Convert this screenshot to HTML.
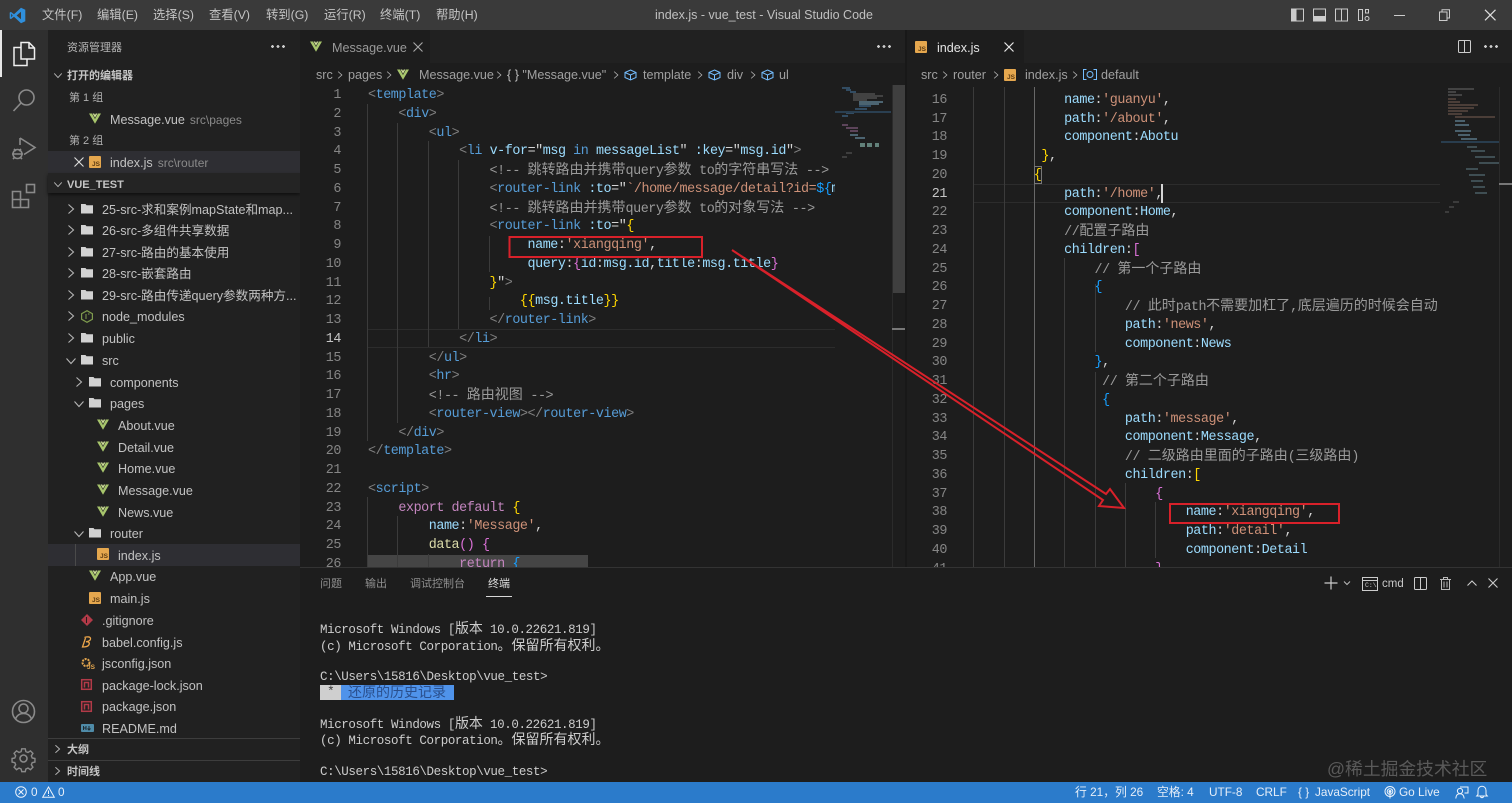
<!DOCTYPE html>
<html lang="zh-CN"><head><meta charset="utf-8"><title>index.js - vue_test - Visual Studio Code</title>
<style>
*{box-sizing:border-box}
html,body{margin:0;padding:0;width:1512px;height:803px;overflow:hidden;background:#1d1d1d}
body{font-family:"Liberation Sans","Noto Sans CJK SC",sans-serif;font-size:13px;color:#ccc;position:relative}
.a{position:absolute;white-space:nowrap}
svg{position:absolute;overflow:visible}
.m{top:7px;font-size:12.3px;line-height:16px;color:#c4c4c4}
.r{position:absolute;white-space:nowrap;font-size:12.6px;line-height:18px;color:#c2c2c2;margin-top:1px}
.h{position:absolute;white-space:nowrap;font-size:11px;font-weight:700;line-height:14px;color:#c4c4c4;margin-top:1px}
.g{position:absolute;white-space:nowrap;font-size:11px;line-height:14px;color:#b0b0b0;margin-top:1px}
.d{font-size:12px;color:#8a8a8a;margin-left:5px}
.js{position:absolute;width:12px;height:12px;background:#e5a74e;border-radius:1px;color:#5b3a12;font:700 6.5px/7px "Liberation Sans",sans-serif;text-align:right;padding:5px 1px 0 0}
.code,.nums{position:absolute;font-family:"Liberation Mono","Noto Sans CJK SC",monospace;font-size:13.4px;letter-spacing:-.44px;line-height:18.75px;white-space:normal}
.code div,.nums div{height:18.75px;white-space:pre}
.nums{color:#858585;text-align:right;width:40px}
.z{font-family:"Noto Sans CJK SC",sans-serif;font-size:14px;letter-spacing:0;line-height:1}
.clip{position:absolute;overflow:hidden}
.t{color:#569cd6}.b{color:#808080}.v{color:#9cdcfe}.s{color:#ce9178}.c{color:#9a9a9a}.p{color:#c586c0}.f{color:#dcdcaa}.w{color:#d4d4d4}.y{color:#ffd700}.o{color:#da70d6}.u{color:#179fff}.k{color:#4ec9b0}
.ig{position:absolute;width:1px;background:#3b3b3b}
.term{position:absolute;left:320px;font-family:"Liberation Mono","Noto Sans CJK SC",monospace;font-size:12.5px;letter-spacing:-.4px;line-height:16px;color:#cccccc;white-space:pre;margin-top:-1px}
.st{position:absolute;top:785px;font-size:11.8px;line-height:15px;color:#e6eef8;white-space:nowrap}
.pt{position:absolute;top:577px;font-size:11px;line-height:14px;color:#8f8f8f}
.i{fill:none;stroke:#8a8a8a;stroke-width:1.6}
.ch{fill:none;stroke:#b5b5b5;stroke-width:1.1}
</style></head><body>
<svg width="0" height="0" style="position:absolute"><defs>
<symbol id="vue" viewBox="0 0 12 11"><path d="M0 .5h3L6 6 9 .5h3L6 10.8z" fill="#a7c56c"/><path d="M3.6.5H5.2L6 2 6.8.5h1.6L6 4.8z" fill="#d0e09a"/></symbol>
<symbol id="fo" viewBox="0 0 12 11"><path d="M0 1h4.5l1 1.2H12V10.5H0z" fill="#d2d2d2"/></symbol>
<symbol id="cr" viewBox="0 0 8 12"><path d="M1.5 1.5 6.5 6l-5 4.5" fill="none" stroke="#b5b5b5" stroke-width="1.1"/></symbol>
<symbol id="cd" viewBox="0 0 12 8"><path d="M1.5 1.5 6 6.5l4.5-5" fill="none" stroke="#b5b5b5" stroke-width="1.1"/></symbol>
</defs></svg>

<!-- title bar -->
<div class="a" style="left:0;top:0;width:1512px;height:30px;background:#3a3a3a"></div>
<svg style="left:9px;top:7px" width="17" height="17" viewBox="0 0 17 17"><path d="M12 .7 16.3 2.7V14.3L12 16.3 5 9.7 1.9 12.1.7 11.4V5.6L1.9 4.9 5 7.3z" fill="#2f8fdc"/><path d="M12 4.8 7.6 8.5 12 12.2z" fill="#3a3a3a"/><path d="M2.2 6.6 3.7 8.5 2.2 10.4z" fill="#3a3a3a"/></svg>
<div class="a m" style="left:42px">文件(F)</div><div class="a m" style="left:97px">编辑(E)</div><div class="a m" style="left:153px">选择(S)</div><div class="a m" style="left:209px">查看(V)</div><div class="a m" style="left:266px">转到(G)</div><div class="a m" style="left:324px">运行(R)</div><div class="a m" style="left:380px">终端(T)</div><div class="a m" style="left:436px">帮助(H)</div>
<div class="a" style="left:655px;top:7px;font-size:12.5px;line-height:16px;color:#c0c0c0">index.js - vue_test - Visual Studio Code</div>
<svg style="left:1291px;top:8px" width="80" height="14" viewBox="0 0 80 14">
<rect x=".5" y="1" width="12" height="12" fill="none" stroke="#ccc"/><rect x=".5" y="1" width="5" height="12" fill="#ccc"/>
<rect x="22.5" y="1" width="12" height="12" fill="none" stroke="#ccc"/><rect x="22.5" y="8" width="12" height="5" fill="#ccc"/>
<rect x="44.5" y="1" width="12" height="12" fill="none" stroke="#ccc"/><path d="M50.5 1v12" stroke="#ccc"/>
<rect x="67.5" y="1.5" width="4" height="11" fill="none" stroke="#ccc"/><rect x="74.5" y="1.5" width="3" height="3.5" fill="none" stroke="#ccc"/><circle cx="76" cy="10.5" r="2" fill="none" stroke="#ccc"/></svg>
<svg style="left:1394px;top:9px" width="106" height="12" viewBox="0 0 106 12"><path d="M0 6.5H11" stroke="#ccc"/><path d="M45.5 3h7.500v8.500H45.500zM48 3V.8h7.500V9H53" fill="none" stroke="#ccc"/><path d="M91 .8 101.500 11.300M101.500 .8 91 11.300" stroke="#ddd" stroke-width="1.200"/></svg>

<!-- activity bar -->
<div class="a" style="left:0;top:30px;width:48px;height:752px;background:#2f2f2f"></div>
<div class="a" style="left:0;top:30px;width:2px;height:47px;background:#e8e8e8"></div>
<svg style="left:12px;top:41px" width="24" height="26" viewBox="0 0 24 26" fill="none" stroke="#efefef" stroke-width="1.500"><path d="M9 1.500h8l5.500 5.500V18H9z"/><path d="M17 1.500V7h5.500"/><path d="M9 6.500H2V24.500H15V18"/></svg>
<svg style="left:12px;top:88px" width="24" height="24" viewBox="0 0 24 24" class="i"><circle cx="14.500" cy="9.500" r="7.500"/><path d="M9 15 1.500 23"/></svg>
<svg style="left:11px;top:136px" width="26" height="26" viewBox="0 0 26 26" class="i"><path d="M9 2 24 11.500 13 18.500M9 2v7"/><circle cx="6.500" cy="18" r="4.500"/><path d="M1 18h11M3 13l2 2M10 13l-2 2M2 23l2-2M11 23l-2-2"/></svg>
<svg style="left:11px;top:183px" width="26" height="26" viewBox="0 0 26 26" class="i"><path d="M1.500 8.500h8v8h8v8h-16zM1.500 16.500h8v8"/><rect x="15.500" y="1.500" width="8" height="8"/></svg>
<svg style="left:11px;top:699px" width="25" height="25" viewBox="0 0 25 25" class="i"><circle cx="12.500" cy="12.500" r="11"/><circle cx="12.500" cy="9.500" r="4.500"/><path d="M4.500 20c1.500-4 4-5.500 8-5.500s6.500 1.500 8 5.500"/></svg>
<svg style="left:11px;top:746px" width="25" height="25" viewBox="0 0 25 25" class="i"><circle cx="12.500" cy="12.500" r="3.500"/><path d="M10.500 1.500h4l.7 3.200 2.400 1 2.800-1.800 2.800 2.800-1.800 2.800 1 2.400 3.100.6v4l-3.100.7-1 2.400 1.800 2.800-2.800 2.800-2.800-1.800-2.400 1-.7 3h-4l-.7-3-2.400-1-2.800 1.800-2.800-2.800 1.800-2.800-1-2.400-3.100-.7v-4l3.100-.6 1-2.400-1.800-2.800 2.800-2.800 2.800 1.800 2.400-1z" transform="translate(1.500 1.500) scale(.88)"/></svg>

<!-- sidebar -->
<div class="a" style="left:48px;top:30px;width:252px;height:752px;background:#212121"></div>
<div class="g" style="left:67px;top:40px;color:#b5b5b5">资源管理器</div>
<div class="a" style="left:271px;top:45px;width:14px;height:3px;background:radial-gradient(circle at 1.500px 1.500px,#ccc 1.300px,transparent 1.500px) 0 0/5.500px 3px repeat-x"></div>
<svg style="left:53px;top:72px" width="10" height="7"><use href="#cd" width="10" height="7"/></svg>
<div class="h" style="left:67px;top:68px">打开的编辑器</div>
<div class="g" style="left:69px;top:90px">第 1 组</div>
<svg style="left:89px;top:113px" width="12" height="11"><use href="#vue" width="12" height="11"/></svg>
<div class="r" style="left:110px;top:110px">Message.vue<span class="d">src\pages</span></div>
<div class="g" style="left:69px;top:133px">第 2 组</div>
<div class="a" style="left:48px;top:151px;width:252px;height:22px;background:#2e2e33"></div>
<svg style="left:74px;top:157px" width="10" height="10"><path d="M.5.500 9.500 9.500M9.500.500.500 9.500" stroke="#ddd" stroke-width="1.100"/></svg>
<div class="js" style="left:89px;top:156px">JS</div>
<div class="r" style="left:110px;top:153px">index.js<span class="d">src\router</span></div>
<div class="a" style="left:48px;top:173px;width:252px;height:20px;background:#242424;box-shadow:0 2px 3px #111"></div>
<svg style="left:53px;top:181px" width="10" height="7"><use href="#cd" width="10" height="7"/></svg>
<div class="h" style="left:67px;top:177px">VUE_TEST</div>

<svg style="left:67px;top:203px" width="8" height="12"><use href="#cr" width="8" height="12"/></svg><svg style="left:81px;top:203px" width="12" height="11"><use href="#fo" width="12" height="11"/></svg><div class="r" style="left:102px;top:200px">25-src-求和案例mapState和map...</div>
<svg style="left:67px;top:224px" width="8" height="12"><use href="#cr" width="8" height="12"/></svg><svg style="left:81px;top:224px" width="12" height="11"><use href="#fo" width="12" height="11"/></svg><div class="r" style="left:102px;top:221px">26-src-多组件共享数据</div>
<svg style="left:67px;top:246px" width="8" height="12"><use href="#cr" width="8" height="12"/></svg><svg style="left:81px;top:246px" width="12" height="11"><use href="#fo" width="12" height="11"/></svg><div class="r" style="left:102px;top:243px">27-src-路由的基本使用</div>
<svg style="left:67px;top:267px" width="8" height="12"><use href="#cr" width="8" height="12"/></svg><svg style="left:81px;top:267px" width="12" height="11"><use href="#fo" width="12" height="11"/></svg><div class="r" style="left:102px;top:264px">28-src-嵌套路由</div>
<svg style="left:67px;top:289px" width="8" height="12"><use href="#cr" width="8" height="12"/></svg><svg style="left:81px;top:289px" width="12" height="11"><use href="#fo" width="12" height="11"/></svg><div class="r" style="left:102px;top:286px">29-src-路由传递query参数两种方...</div>
<svg style="left:67px;top:310px" width="8" height="12"><use href="#cr" width="8" height="12"/></svg><svg style="left:81px;top:310px" width="12" height="13" viewBox="0 0 12 13"><path d="M6 .7 11.400 3.700V9.300L6 12.300.6 9.300V3.700z" fill="none" stroke="#7f9c4e" stroke-width="1.200"/><path d="M5 4v5M7 4H8.500" stroke="#7f9c4e"/></svg><div class="r" style="left:102px;top:307px">node_modules</div>
<svg style="left:67px;top:332px" width="8" height="12"><use href="#cr" width="8" height="12"/></svg><svg style="left:81px;top:332px" width="12" height="11"><use href="#fo" width="12" height="11"/></svg><div class="r" style="left:102px;top:329px">public</div>
<svg style="left:65px;top:357px" width="12" height="8"><use href="#cd" width="12" height="8"/></svg><svg style="left:81px;top:354px" width="12" height="11"><use href="#fo" width="12" height="11"/></svg><div class="r" style="left:102px;top:351px">src</div>
<svg style="left:75px;top:376px" width="8" height="12"><use href="#cr" width="8" height="12"/></svg><svg style="left:89px;top:376px" width="12" height="11"><use href="#fo" width="12" height="11"/></svg><div class="r" style="left:110px;top:373px">components</div>
<svg style="left:73px;top:400px" width="12" height="8"><use href="#cd" width="12" height="8"/></svg><svg style="left:89px;top:397px" width="12" height="11"><use href="#fo" width="12" height="11"/></svg><div class="r" style="left:110px;top:394px">pages</div>
<svg style="left:97px;top:419px" width="12" height="11"><use href="#vue" width="12" height="11"/></svg><div class="r" style="left:118px;top:416px">About.vue</div>
<svg style="left:97px;top:441px" width="12" height="11"><use href="#vue" width="12" height="11"/></svg><div class="r" style="left:118px;top:438px">Detail.vue</div>
<svg style="left:97px;top:462px" width="12" height="11"><use href="#vue" width="12" height="11"/></svg><div class="r" style="left:118px;top:459px">Home.vue</div>
<svg style="left:97px;top:484px" width="12" height="11"><use href="#vue" width="12" height="11"/></svg><div class="r" style="left:118px;top:481px">Message.vue</div>
<svg style="left:97px;top:506px" width="12" height="11"><use href="#vue" width="12" height="11"/></svg><div class="r" style="left:118px;top:503px">News.vue</div>
<svg style="left:73px;top:530px" width="12" height="8"><use href="#cd" width="12" height="8"/></svg><svg style="left:89px;top:527px" width="12" height="11"><use href="#fo" width="12" height="11"/></svg><div class="r" style="left:110px;top:524px">router</div>
<div class="a" style="left:48px;top:544px;width:252px;height:22px;background:#2e2e33"></div>
<div class="a" style="left:75px;top:544px;width:1px;height:22px;background:#4a4a4a"></div>
<div class="js" style="left:97px;top:548px">JS</div><div class="r" style="left:118px;top:546px">index.js</div>
<svg style="left:89px;top:570px" width="12" height="11"><use href="#vue" width="12" height="11"/></svg><div class="r" style="left:110px;top:567px">App.vue</div>
<div class="js" style="left:89px;top:592px">JS</div><div class="r" style="left:110px;top:589px">main.js</div>
<svg style="left:81px;top:614px" width="12" height="12" viewBox="0 0 12 12"><path d="M6 0 12 6 6 12 0 6z" fill="#b23a48"/><path d="M5.500 3v6" stroke="#2a1a1a"/></svg><div class="r" style="left:102px;top:611px">.gitignore</div>
<svg style="left:81px;top:636px" width="12" height="12" viewBox="0 0 12 12" fill="none" stroke="#eea64a" stroke-width="1.300"><path d="M3.500 1.500C6 .5 10 .5 9.500 3S6 5.500 5 5.800C8 5.500 9 7 7.800 9S3.500 11 1.500 11L4.500 2"/></svg><div class="r" style="left:102px;top:633px">babel.config.js</div>
<svg style="left:81px;top:657px" width="13" height="13" viewBox="0 0 13 13"><circle cx="5" cy="5.500" r="3.500" fill="none" stroke="#e5a74e" stroke-width="2" stroke-dasharray="2 1"/></svg><div class="a" style="left:87px;top:664px;font:700 6.500px/7px 'Liberation Sans',sans-serif;color:#e5a74e">JS</div><div class="r" style="left:102px;top:654px">jsconfig.json</div>
<svg style="left:81px;top:679px" width="11" height="11" viewBox="0 0 11 11" fill="none" stroke="#b23a48" stroke-width="1.500"><rect x=".7" y=".7" width="9.600" height="9.600"/><path d="M3.500 8.500V3.500H7.500V8.500"/></svg><div class="r" style="left:102px;top:676px">package-lock.json</div>
<svg style="left:81px;top:701px" width="11" height="11" viewBox="0 0 11 11" fill="none" stroke="#b23a48" stroke-width="1.500"><rect x=".7" y=".7" width="9.600" height="9.600"/><path d="M3.500 8.500V3.500H7.500V8.500"/></svg><div class="r" style="left:102px;top:697px">package.json</div>
<svg style="left:81px;top:724px" width="13" height="8" viewBox="0 0 13 8"><rect width="13" height="8" rx="1" fill="#4f8ba8"/><path d="M2.500 6V2M5 6V2M2.500 4H5M8 2v3M6.500 4.500 8 6l1.500-1.500" stroke="#1f2a30" fill="none"/></svg><div class="r" style="left:102px;top:719px">README.md</div>
<div class="a" style="left:48px;top:738px;width:252px;height:1px;background:#3d3d3d"></div>
<div class="a" style="left:48px;top:760px;width:252px;height:1px;background:#3d3d3d"></div>
<svg style="left:54px;top:744px" width="7" height="10"><use href="#cr" width="7" height="10"/></svg><div class="h" style="left:67px;top:742px">大纲</div>
<svg style="left:54px;top:766px" width="7" height="10"><use href="#cr" width="7" height="10"/></svg><div class="h" style="left:67px;top:764px">时间线</div>

<!-- editor tab bars -->
<div class="a" style="left:300px;top:30px;width:1212px;height:33px;background:#212121"></div>
<div class="a" style="left:300px;top:30px;width:130px;height:33px;background:#1d1d1d"></div>
<div class="a" style="left:907px;top:30px;width:117px;height:33px;background:#1d1d1d"></div>
<div class="a" style="left:300px;top:63px;width:1212px;height:23px;background:#1d1d1d"></div>
<div class="a" style="left:905px;top:30px;width:2px;height:537px;background:#181818"></div>
<svg style="left:310px;top:41px" width="12" height="11"><use href="#vue" width="12" height="11"/></svg>
<div class="r" style="left:332px;top:38px;color:#9a9a9a">Message.vue</div>
<svg style="left:413px;top:42px" width="10" height="10"><path d="M.5.500 9.500 9.500M9.500.500.500 9.500" stroke="#a8a8a8" stroke-width="1.100"/></svg>
<div class="a" style="left:877px;top:45px;width:14px;height:3px;background:radial-gradient(circle at 1.500px 1.500px,#ccc 1.300px,transparent 1.500px) 0 0/5.500px 3px repeat-x"></div>
<div class="js" style="left:915px;top:41px">JS</div>
<div class="r" style="left:937px;top:38px;color:#e4e4e4">index.js</div>
<svg style="left:1004px;top:42px" width="10" height="10"><path d="M.5.500 9.500 9.500M9.500.500.500 9.500" stroke="#e8e8e8" stroke-width="1.200"/></svg>
<svg style="left:1458px;top:40px" width="13" height="13"><rect x=".5" y=".5" width="12" height="12" fill="none" stroke="#ccc" rx="1"/><path d="M6.500.500v12" stroke="#ccc"/></svg>
<div class="a" style="left:1484px;top:45px;width:14px;height:3px;background:radial-gradient(circle at 1.500px 1.500px,#ccc 1.300px,transparent 1.500px) 0 0/5.500px 3px repeat-x"></div>

<!-- breadcrumbs -->
<div class="r" style="left:316px;top:65px;color:#a0a0a0">src</div>
<svg style="left:337px;top:70px" width="6" height="10"><use href="#cr" width="6" height="10"/></svg>
<div class="r" style="left:348px;top:65px;color:#a0a0a0">pages</div>
<svg style="left:386px;top:70px" width="6" height="10"><use href="#cr" width="6" height="10"/></svg>
<svg style="left:397px;top:69px" width="12" height="11"><use href="#vue" width="12" height="11"/></svg>
<div class="r" style="left:419px;top:65px;color:#a0a0a0">Message.vue</div>
<svg style="left:496px;top:70px" width="6" height="10"><use href="#cr" width="6" height="10"/></svg>
<div class="r" style="left:507px;top:65px;color:#a0a0a0"><span style="color:#bbb">{ }</span> "Message.vue"</div>
<svg style="left:613px;top:70px" width="6" height="10"><use href="#cr" width="6" height="10"/></svg>
<svg style="left:624px;top:69px" width="13" height="12" viewBox="0 0 13 12"><path d="M6.500 1 12 3.500v5L6.500 11 1 8.500v-5zM1 3.500 6.500 6 12 3.500M6.500 6v5" fill="none" stroke="#75beff"/></svg>
<div class="r" style="left:643px;top:65px;color:#a0a0a0">template</div>
<svg style="left:697px;top:70px" width="6" height="10"><use href="#cr" width="6" height="10"/></svg>
<svg style="left:708px;top:69px" width="13" height="12" viewBox="0 0 13 12"><path d="M6.500 1 12 3.500v5L6.500 11 1 8.500v-5zM1 3.500 6.500 6 12 3.500M6.500 6v5" fill="none" stroke="#75beff"/></svg>
<div class="r" style="left:727px;top:65px;color:#a0a0a0">div</div>
<svg style="left:750px;top:70px" width="6" height="10"><use href="#cr" width="6" height="10"/></svg>
<svg style="left:761px;top:69px" width="13" height="12" viewBox="0 0 13 12"><path d="M6.500 1 12 3.500v5L6.500 11 1 8.500v-5zM1 3.500 6.500 6 12 3.500M6.500 6v5" fill="none" stroke="#75beff"/></svg>
<div class="r" style="left:779px;top:65px;color:#a0a0a0">ul</div>

<div class="r" style="left:921px;top:65px;color:#a0a0a0">src</div>
<svg style="left:942px;top:70px" width="6" height="10"><use href="#cr" width="6" height="10"/></svg>
<div class="r" style="left:953px;top:65px;color:#a0a0a0">router</div>
<svg style="left:993px;top:70px" width="6" height="10"><use href="#cr" width="6" height="10"/></svg>
<div class="js" style="left:1004px;top:69px">JS</div>
<div class="r" style="left:1025px;top:65px;color:#a0a0a0">index.js</div>
<svg style="left:1072px;top:70px" width="6" height="10"><use href="#cr" width="6" height="10"/></svg>
<svg style="left:1083px;top:69px" width="14" height="11" viewBox="0 0 14 11" fill="none" stroke="#75beff"><path d="M3.500.500H.5v10h3M10.500.500h3v10h-3"/><circle cx="7" cy="5.500" r="3"/></svg>
<div class="r" style="left:1101px;top:65px;color:#a0a0a0">default</div>

<!-- left editor -->
<div class="clip" style="left:300px;top:85px;width:605px;height:482px;background:#1d1d1d">
<div class="a" style="left:67px;top:244px;width:468px;height:19px;border-top:1px solid #2c2c2c;border-bottom:1px solid #2c2c2c"></div>
<div class="a" style="left:67px;top:470px;width:221px;height:14px;background:#454545"></div>
<div class="ig" style="left:67px;top:19px;height:337px"></div>
<div class="ig" style="left:97px;top:38px;height:300px"></div>
<div class="ig" style="left:128px;top:56px;height:206px"></div>
<div class="ig" style="left:158px;top:75px;height:169px"></div>
<div class="ig" style="left:189px;top:151px;height:36px"></div>
<div class="ig" style="left:189px;top:212px;height:13px"></div>
<div class="ig" style="left:67px;top:412px;height:70px"></div>
<div class="ig" style="left:97px;top:431px;height:51px"></div>
<div class="ig" style="left:128px;top:469px;height:13px"></div>
<div class="nums" style="left:1px;top:2px"><div>1</div><div>2</div><div>3</div><div>4</div><div>5</div><div>6</div><div>7</div><div>8</div><div>9</div><div>10</div><div>11</div><div>12</div><div>13</div><div style="color:#c6c6c6">14</div><div>15</div><div>16</div><div>17</div><div>18</div><div>19</div><div>20</div><div>21</div><div>22</div><div>23</div><div>24</div><div>25</div><div>26</div></div>
<div class="clip" style="left:68px;top:0;width:467px;height:482px">
<div class="code" style="left:0;top:2px">
<div><span class="b">&lt;</span><span class="t">template</span><span class="b">&gt;</span></div>
<div>    <span class="b">&lt;</span><span class="t">div</span><span class="b">&gt;</span></div>
<div>        <span class="b">&lt;</span><span class="t">ul</span><span class="b">&gt;</span></div>
<div>            <span class="b">&lt;</span><span class="t">li</span> <span class="v">v-for</span><span class="w">="</span><span class="v">msg</span> <span class="t">in</span> <span class="v">messageList</span><span class="w">"</span> <span class="v">:key</span><span class="w">="</span><span class="v">msg.id</span><span class="w">"</span><span class="b">&gt;</span></div>
<div>                <span class="c">&lt;!-- <span class="z">跳转路由并携带</span>query<span class="z">参数</span> to<span class="z">的字符串写法</span> --&gt;</span></div>
<div>                <span class="b">&lt;</span><span class="t">router-link</span> <span class="v">:to</span><span class="w">="</span><span class="s">`/home/message/detail?id=</span><span class="u">${</span><span class="v">msg.id</span></div>
<div>                <span class="c">&lt;!-- <span class="z">跳转路由并携带</span>query<span class="z">参数</span> to<span class="z">的对象写法</span> --&gt;</span></div>
<div>                <span class="b">&lt;</span><span class="t">router-link</span> <span class="v">:to</span><span class="w">="</span><span class="y">{</span></div>
<div>                     <span class="v">name</span><span class="w">:</span><span class="s">'xiangqing'</span><span class="w">,</span></div>
<div>                     <span class="v">query</span><span class="w">:</span><span class="o">{</span><span class="v">id</span><span class="w">:</span><span class="v">msg.id</span><span class="w">,</span><span class="v">title</span><span class="w">:</span><span class="v">msg.title</span><span class="o">}</span></div>
<div>                <span class="y">}</span><span class="w">"</span><span class="b">&gt;</span></div>
<div>                    <span class="y">{{</span><span class="v">msg.title</span><span class="y">}}</span></div>
<div>                <span class="b">&lt;/</span><span class="t">router-link</span><span class="b">&gt;</span></div>
<div>            <span class="b">&lt;/</span><span class="t">li</span><span class="b">&gt;</span></div>
<div>        <span class="b">&lt;/</span><span class="t">ul</span><span class="b">&gt;</span></div>
<div>        <span class="b">&lt;</span><span class="t">hr</span><span class="b">&gt;</span></div>
<div>        <span class="c">&lt;!-- <span class="z">路由视图</span> --&gt;</span></div>
<div>        <span class="b">&lt;</span><span class="t">router-view</span><span class="b">&gt;&lt;/</span><span class="t">router-view</span><span class="b">&gt;</span></div>
<div>    <span class="b">&lt;/</span><span class="t">div</span><span class="b">&gt;</span></div>
<div><span class="b">&lt;/</span><span class="t">template</span><span class="b">&gt;</span></div>
<div> </div>
<div><span class="b">&lt;</span><span class="t">script</span><span class="b">&gt;</span></div>
<div>    <span class="p">export default</span> <span class="y">{</span></div>
<div>        <span class="v">name</span><span class="w">:</span><span class="s">'Message'</span><span class="w">,</span></div>
<div>        <span class="f">data</span><span class="o">()</span> <span class="o">{</span></div>
<div>            <span class="p">return</span> <span class="u">{</span></div>
</div></div>
<!-- minimap -->
<svg style="left:535px;top:0" width="57" height="110" viewBox="0 0 57 110" opacity=".75">
<g stroke-width="1"><path d="M7 3h8M11 5h5M15 7h6" stroke="#569cd6"/><path d="M18 9h22M18 11h30M18 13h24M18 15h14" stroke="#7f7f7f"/><path d="M24 17h24M24 19h20" stroke="#9cdcfe"/><path d="M24 21h12M20 24h12" stroke="#569cd6"/><path d="M11 28h8M7 31h6" stroke="#569cd6"/><path d="M0 27h56" stroke="#2f4b63" stroke-width="2"/><path d="M7 40h6M11 43h12M15 46h8" stroke="#c586c0"/><path d="M15 50h8M20 53h10" stroke="#9cdcfe"/><path d="M25 60h5M32 60h5M40 60h4" stroke="#7aa39a" stroke-width="4"/><path d="M11 68h6M7 72h5" stroke="#777"/></g></svg>
<div class="a" style="left:592px;top:0;width:13px;height:208px;background:#3f3f3f"></div>
<div class="a" style="left:592px;top:0;width:1px;height:482px;background:#2b2b2b"></div>
<div class="a" style="left:592px;top:243px;width:13px;height:2px;background:#777"></div>
</div>

<!-- right editor -->
<div class="clip" style="left:907px;top:87px;width:605px;height:480px;background:#1d1d1d">
<div class="a" style="left:66px;top:97px;width:467px;height:19px;border-top:1px solid #2c2c2c;border-bottom:1px solid #2c2c2c"></div>
<div class="ig" style="left:66px;top:0;height:480px"></div>
<div class="ig" style="left:97px;top:0;height:480px"></div>
<div class="ig" style="left:127px;top:0;height:480px;background:#686868"></div>
<div class="ig" style="left:157px;top:171px;height:309px"></div>
<div class="ig" style="left:188px;top:197px;height:68px"></div>
<div class="ig" style="left:188px;top:285px;height:195px"></div>
<div class="ig" style="left:218px;top:396px;height:84px"></div>
<div class="ig" style="left:248px;top:415px;height:56px"></div>
<div class="nums" style="left:0;top:-14px"><div>15</div><div>16</div><div>17</div><div>18</div><div>19</div><div>20</div><div style="color:#c6c6c6">21</div><div>22</div><div>23</div><div>24</div><div>25</div><div>26</div><div>27</div><div>28</div><div>29</div><div>30</div><div>31</div><div>32</div><div>33</div><div>34</div><div>35</div><div>36</div><div>37</div><div>38</div><div>39</div><div>40</div><div>41</div></div>
<div class="a" style="left:127px;top:79px;width:8px;height:18px;border:1px solid #777"></div>
<div class="clip" style="left:66px;top:0;width:467px;height:480px">
<div class="code" style="left:0;top:-14px">
<div>        <span class="y">{</span></div>
<div>            <span class="v">name</span><span class="w">:</span><span class="s">'guanyu'</span><span class="w">,</span></div>
<div>            <span class="v">path</span><span class="w">:</span><span class="s">'/about'</span><span class="w">,</span></div>
<div>            <span class="v">component</span><span class="w">:</span><span class="v">Abotu</span></div>
<div>         <span class="y">}</span><span class="w">,</span></div>
<div>        <span class="y">{</span></div>
<div>            <span class="v">path</span><span class="w">:</span><span class="s">'/home'</span><span class="w">,</span></div>
<div>            <span class="v">component</span><span class="w">:</span><span class="v">Home</span><span class="w">,</span></div>
<div>            <span class="c">//<span class="z">配置子路由</span></span></div>
<div>            <span class="v">children</span><span class="w">:</span><span class="o">[</span></div>
<div>                <span class="c">// <span class="z">第一个子路由</span></span></div>
<div>                <span class="u">{</span></div>
<div>                    <span class="c">// <span class="z">此时</span>path<span class="z">不需要加杠了</span>,<span class="z">底层遍历的时候会自动</span></span></div>
<div>                    <span class="v">path</span><span class="w">:</span><span class="s">'news'</span><span class="w">,</span></div>
<div>                    <span class="v">component</span><span class="w">:</span><span class="v">News</span></div>
<div>                <span class="u">}</span><span class="w">,</span></div>
<div>                 <span class="c">// <span class="z">第二个子路由</span></span></div>
<div>                 <span class="u">{</span></div>
<div>                    <span class="v">path</span><span class="w">:</span><span class="s">'message'</span><span class="w">,</span></div>
<div>                    <span class="v">component</span><span class="w">:</span><span class="v">Message</span><span class="w">,</span></div>
<div>                    <span class="c">// <span class="z">二级路由里面的子路由</span>(<span class="z">三级路由</span>)</span></div>
<div>                    <span class="v">children</span><span class="w">:</span><span class="y">[</span></div>
<div>                        <span class="o">{</span></div>
<div>                            <span class="v">name</span><span class="w">:</span><span class="s">'xiangqing'</span><span class="w">,</span></div>
<div>                            <span class="v">path</span><span class="w">:</span><span class="s">'detail'</span><span class="w">,</span></div>
<div>                            <span class="v">component</span><span class="w">:</span><span class="v">Detail</span></div>
<div>                        <span class="o">}</span></div>
</div></div>
<div class="a" style="left:254px;top:97px;width:2px;height:19px;background:#d4d4d4"></div>
<svg style="left:534px;top:0" width="58" height="150" viewBox="0 0 58 150" opacity=".7">
<g stroke-width="1"><path d="M7 2h26M7 5h8M7 8h14" stroke="#8a8a8a"/><path d="M7 12h8M7 15h12M7 18h30M7 21h26M7 24h20M7 27h14M14 30h40" stroke="#a07a6a"/><path d="M14 34h10M14 38h14M14 44h16" stroke="#9cdcfe"/><path d="M17 48h12M20 52h16" stroke="#9cdcfe"/><path d="M0 55h58" stroke="#2f4b63" stroke-width="2"/><path d="M26 60h10M30 64h14M34 70h20M38 76h20M25 82h12M28 88h16M30 94h12M32 100h12M34 106h12" stroke="#7fa8b8"/><path d="M12 115h6M8 120h5M4 125h4" stroke="#777"/></g></svg>
<div class="a" style="left:592px;top:0;width:1px;height:480px;background:#2b2b2b"></div>
<div class="a" style="left:592px;top:96px;width:13px;height:2px;background:#777"></div>
</div>

<!-- panel -->
<div class="a" style="left:300px;top:567px;width:1212px;height:215px;background:#1d1d1d;border-top:1px solid #333"></div>
<div class="pt" style="left:320px">问题</div><div class="pt" style="left:365px">输出</div><div class="pt" style="left:410px">调试控制台</div><div class="pt" style="left:488px;color:#dedede">终端</div>
<div class="a" style="left:486px;top:596px;width:26px;height:1px;background:#d8d8d8"></div>
<svg style="left:1324px;top:576px" width="26" height="14" viewBox="0 0 26 14"><path d="M7 .5v13M.5 7h13" stroke="#ccc" stroke-width="1.200"/><path d="M20 5.500 23 8.500 26 5.500" fill="none" stroke="#bbb"/></svg>
<svg style="left:1362px;top:577px" width="16" height="14" viewBox="0 0 16 14"><rect x=".5" y=".5" width="15" height="13" fill="none" stroke="#ccc"/><path d="M.5 3.500h15" stroke="#ccc"/></svg>
<div class="a" style="left:1365px;top:582px;font:6.500px/7px 'Liberation Mono',monospace;color:#ccc">C:\</div>
<div class="a" style="left:1382px;top:577px;font-size:11.500px;line-height:14px;color:#c8c8c8">cmd</div>
<svg style="left:1414px;top:577px" width="14" height="13"><rect x=".5" y=".5" width="12" height="12" fill="none" stroke="#ccc" rx="1"/><path d="M6.500.500v12" stroke="#ccc"/></svg>
<svg style="left:1440px;top:577px" width="11" height="13" viewBox="0 0 11 13" fill="none" stroke="#bbb"><path d="M0 2.500h11M3.500 2.500V.5h4v2M1.500 2.500v10h8v-10M4 4.500v6M7 4.500v6"/></svg>
<svg style="left:1467px;top:580px" width="10" height="6"><path d="M.5 5.500 5 1l4.500 4.500" fill="none" stroke="#ccc" stroke-width="1.100"/></svg>
<svg style="left:1488px;top:578px" width="10" height="10"><path d="M.5.500 9.500 9.500M9.500.500.500 9.500" stroke="#ccc" stroke-width="1.100"/></svg>

<div class="term" style="top:622px">Microsoft Windows [<span class="z">版本</span> 10.0.22621.819]</div>
<div class="term" style="top:639px">(c) Microsoft Corporation<span class="z">。保留所有权利。</span></div>
<div class="term" style="top:670px">C:\Users\15816\Desktop\vue_test&gt;</div>
<div class="a" style="left:320px;top:685px;width:21px;height:15px;background:#cfcfcf"></div>
<div class="a" style="left:341px;top:685px;width:113px;height:15px;background:#4f93ea"></div>
<div class="term" style="top:685px;color:#3a3a3a"> *</div>
<div class="a" style="left:348px;top:684px;font-size:14px;line-height:16px;color:#2a4f8c;font-family:'Noto Sans CJK SC',sans-serif">还原的历史记录</div>
<div class="term" style="top:717px">Microsoft Windows [<span class="z">版本</span> 10.0.22621.819]</div>
<div class="term" style="top:733px">(c) Microsoft Corporation<span class="z">。保留所有权利。</span></div>
<div class="term" style="top:765px">C:\Users\15816\Desktop\vue_test&gt;</div>

<!-- annotations -->
<svg style="left:0;top:0" width="1512" height="803" viewBox="0 0 1512 803" fill="none" stroke="#d8212a" stroke-width="2">
<rect x="509.500" y="237" width="192.500" height="20"/>
<rect x="1170" y="504" width="169" height="19"/>
<path d="M732 250 1106 494 1110 489 1124 508 1099 506 1103 500Z"/>
</svg>

<!-- status bar -->
<div class="a" style="left:0;top:782px;width:1512px;height:21px;background:#2b7bcb"></div>
<svg style="left:15px;top:786px" width="12" height="12" viewBox="0 0 12 12" fill="none" stroke="#eef4fb"><circle cx="6" cy="6" r="5.300"/><path d="M3.500 3.500l5 5M8.500 3.500l-5 5"/></svg>
<div class="st" style="left:31px">0</div>
<svg style="left:42px;top:786px" width="13" height="12" viewBox="0 0 13 12" fill="none" stroke="#eef4fb"><path d="M6.500 1 12.300 11.300H.7zM6.500 4.500v3.500M6.500 9v1"/></svg>
<div class="st" style="left:58px">0</div>
<div class="st" style="left:1075px">行 21，列 26</div>
<div class="st" style="left:1157px">空格: 4</div>
<div class="st" style="left:1209px">UTF-8</div>
<div class="st" style="left:1256px">CRLF</div>
<div class="st" style="left:1298px">{ }</div>
<div class="st" style="left:1315px">JavaScript</div>
<svg style="left:1384px;top:786px" width="12" height="13" viewBox="0 0 12 13" fill="none" stroke="#eef4fb"><circle cx="6" cy="5.500" r="5"/><circle cx="6" cy="5.500" r="2.800"/><circle cx="6" cy="5.500" r="1" fill="#eef4fb"/><path d="M6 7v5.500"/></svg>
<div class="st" style="left:1399px">Go Live</div>
<svg style="left:1455px;top:786px" width="14" height="13" viewBox="0 0 14 13" fill="none" stroke="#eef4fb"><circle cx="5" cy="5" r="2.600"/><path d="M.8 12.500C1 9 2.500 7.800 5 7.800S8.800 9 9.200 12.500M5 1H13V7H9.500"/></svg>
<svg style="left:1476px;top:785px" width="12" height="14" viewBox="0 0 12 14" fill="none" stroke="#eef4fb"><path d="M2 9.500V5.500C2 3 3.700 1.300 6 1.300S10 3 10 5.500V9.500L11.300 11H.7zM4.500 11.500C4.700 13 7.300 13 7.500 11.500"/></svg>

<div class="a" style="left:1327px;top:758px;font-size:17.800px;line-height:22px;color:#5a5a5a;font-family:'Liberation Sans','Noto Sans CJK SC',sans-serif">@稀土掘金技术社区</div>
</body></html>
